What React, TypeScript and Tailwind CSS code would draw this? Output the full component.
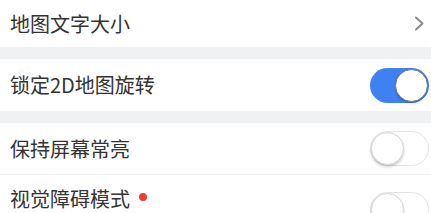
import { useState } from 'react'

type Row = { key: string; label: string; on: boolean; dot?: boolean }

function Toggle({ on, onClick }: { on: boolean; onClick: () => void }) {
  return (
    <button
      type="button"
      onClick={onClick}
      className={
        on
          ? 'relative w-[59px] h-[35px] rounded-full bg-[#3f80f3] shrink-0'
          : 'relative w-[59px] h-[35px] rounded-full bg-white border-[1.5px] border-[#e4e4e4] shrink-0'
      }
    >
      <span
        className={
          on
            ? 'absolute top-[1px] right-[1px] w-[33px] h-[33px] rounded-full bg-white border-[1.5px] border-[#6b7688] shadow-[0_1px_2px_rgba(0,0,0,0.25)]'
            : 'absolute top-[-0.5px] left-[-0.5px] w-[33px] h-[33px] rounded-full bg-white border-[1.5px] border-[#d6d6d6] shadow-[0_2px_3px_rgba(0,0,0,0.2)]'
        }
      />
    </button>
  )
}

export default function App() {
  const [rows, setRows] = useState<Row[]>([
    { key: 'lock2d', label: '锁定2D地图旋转', on: true },
    { key: 'screen', label: '保持屏幕常亮', on: false },
    { key: 'vision', label: '视觉障碍模式', on: false, dot: true },
  ])

  const flip = (key: string) => {
    setRows(rows.map((r) => (r.key === key ? { ...r, on: !r.on } : r)))
  }

  const [lock, screen, vision] = rows

  return (
    <div
      className="w-full h-[213px] overflow-hidden bg-[#f0f1f3] text-[#333333]"
      style={{ fontFamily: '"Noto Sans CJK SC", "Noto Sans", sans-serif' }}
    >
      <div className="h-[47px] bg-white flex items-center justify-between pl-[10px] pr-[6px]">
        <span className="text-[20px] leading-none">地图文字大小</span>
        <svg width="11" height="15" viewBox="0 0 11 15" fill="none">
          <path d="M2 1.5 L8.5 7.5 L2 13.5" stroke="#8a8a8a" strokeWidth="2" strokeLinecap="round" strokeLinejoin="round" />
        </svg>
      </div>

      <div className="h-[12px]" />

      <div className="h-[52px] bg-white flex items-center justify-between pl-[10px] pr-[2px]">
        <span className="text-[20px] leading-none">{lock.label}</span>
        <Toggle on={lock.on} onClick={() => flip(lock.key)} />
      </div>

      <div className="h-[12px]" />

      <div className="bg-white">
        <div className="h-[52px] flex items-center justify-between pl-[10px] pr-[2px] border-b border-[#efefef]">
          <span className="text-[20px] leading-none">{screen.label}</span>
          <Toggle on={screen.on} onClick={() => flip(screen.key)} />
        </div>
        <div className="h-[70px] flex items-start justify-between pl-[10px] pr-[2px]">
          <div className="flex items-center gap-[9px] pt-[14px]">
            <span className="text-[20px] leading-none">{vision.label}</span>
            {vision.dot && <span className="w-[8px] h-[8px] rounded-full bg-[#ef3d3d] -mt-[4px]" />}
          </div>
          <div className="pt-[17px]">
            <Toggle on={vision.on} onClick={() => flip(vision.key)} />
          </div>
        </div>
      </div>
    </div>
  )
}
